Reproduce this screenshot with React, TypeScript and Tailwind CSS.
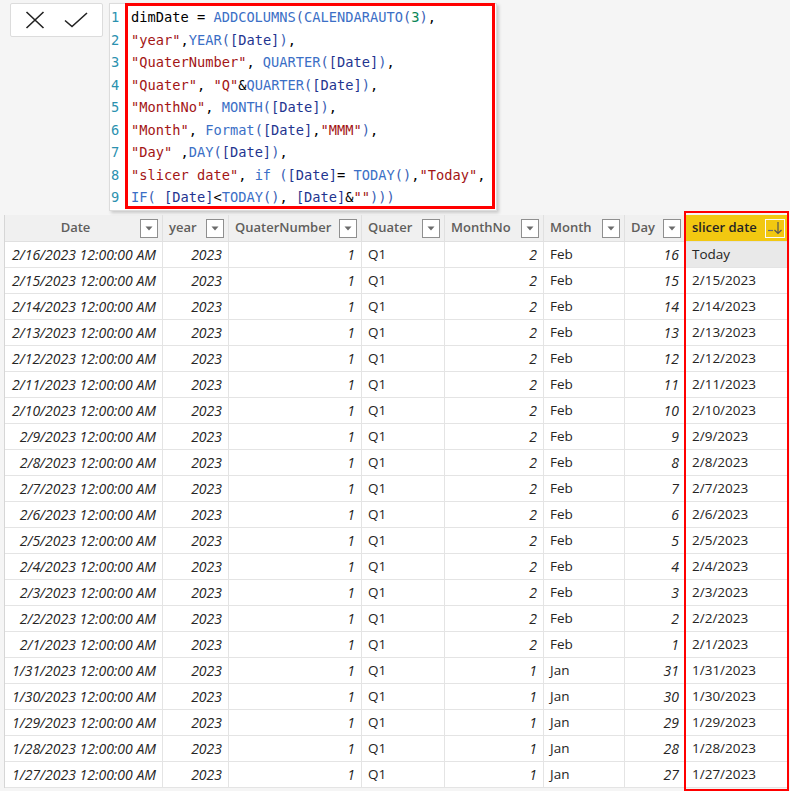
import React from 'react';

const codeLines = [
  'dimDate = ADDCOLUMNS(CALENDARAUTO(3),',
  '"year",YEAR([Date]),',
  '"QuaterNumber", QUARTER([Date]),',
  '"Quater", "Q"&QUARTER([Date]),',
  '"MonthNo", MONTH([Date]),',
  '"Month", Format([Date],"MMM"),',
  '"Day" ,DAY([Date]),',
  '"slicer date", if ([Date]= TODAY(),"Today",',
  'IF( [Date]<TODAY(), [Date]&"")))',
];

const tokenRe = /("[^"]*")|(\[[^\]]*\])|([A-Za-z]+(?=\s*\())|(\d+)|([()])|([^"\[A-Za-z\d()]+|[A-Za-z]+)/g;

const CodeLine = ({ text }: { text: string }) => {
  const parts: React.ReactNode[] = [];
  let m: RegExpExecArray | null;
  let i = 0;
  tokenRe.lastIndex = 0;
  while ((m = tokenRe.exec(text)) !== null) {
    let cls = 'text-black';
    if (m[1]) cls = 'text-[#a31515]';
    else if (m[2]) cls = 'text-[#1f3590]';
    else if (m[3]) cls = 'text-[#3b6fc6]';
    else if (m[4]) cls = 'text-[#098658]';
    else if (m[5]) cls = 'text-[#3b5fb5]';
    parts.push(
      <span key={i++} className={cls}>
        {m[0]}
      </span>
    );
  }
  return <div className="whitespace-pre">{parts}</div>;
};

type Row = { date: string; day: number; month: string; monthNo: number; slicer: string };

const makeRows = (): Row[] => {
  const rows: Row[] = [];
  for (let d = 16; d >= 1; d--) {
    rows.push({
      date: `2/${d}/2023 12:00:00 AM`,
      day: d,
      month: 'Feb',
      monthNo: 2,
      slicer: d === 16 ? 'Today' : `2/${d}/2023`,
    });
  }
  for (let d = 31; d >= 27; d--) {
    rows.push({ date: `1/${d}/2023 12:00:00 AM`, day: d, month: 'Jan', monthNo: 1, slicer: `1/${d}/2023` });
  }
  return rows;
};

const FilterIcon = () => (
  <div className="flex h-[19px] w-[18px] shrink-0 items-center justify-center border border-[#8f8f8f] bg-white">
    <svg width="8" height="5" viewBox="0 0 8 5">
      <path d="M0.5 0.5 L7.5 0.5 L4 4.5 Z" fill="#6b6b6b" />
    </svg>
  </div>
);

const SortIcon = () => (
  <div className="flex h-[19px] w-[20px] shrink-0 items-center justify-center border border-[#fbfbfb]">
    <svg width="16" height="14" viewBox="0 0 16 14">
      <path d="M1 9.5 H6" stroke="#6b6b6b" strokeWidth="1.2" />
      <path d="M11 1 V12.5 M7.5 9 L11 12.5 L14.5 9" stroke="#555" strokeWidth="1.2" fill="none" />
    </svg>
  </div>
);

const cols = [
  { name: 'Date', w: 'w-[158px]', center: true },
  { name: 'year', w: 'w-[66px]' },
  { name: 'QuaterNumber', w: 'w-[133px]' },
  { name: 'Quater', w: 'w-[83px]' },
  { name: 'MonthNo', w: 'w-[99px]' },
  { name: 'Month', w: 'w-[81px]' },
  { name: 'Day', w: 'w-[61px]' },
];

const cell = 'flex h-[26px] shrink-0 items-center border-r border-b border-[#e4e4e4] px-[6px] text-[13.5px]';
const num = `${cell} justify-end italic !text-[14px]`;

export default function App() {
  const rows = makeRows();
  return (
    <div
      className="relative h-[791px] w-[790px] overflow-hidden bg-[#f5f5f5] text-[13px] text-[#252423]"
      style={{ fontFamily: '"Open Sans", "Noto Sans", sans-serif' }}
    >
      {/* formula bar */}
      <div className="flex h-[215px] items-start">
        <div className="ml-[10px] mt-[3px] flex h-[34px] w-[93px] items-center justify-center gap-[19px] rounded-[2px] border border-[#dcdcdc] bg-white">
          <svg width="20" height="18" viewBox="0 0 20 18">
            <path d="M1.5 1 L18.5 17 M18.5 1 L1.5 17" stroke="#222" strokeWidth="1.6" />
          </svg>
          <svg width="24" height="16" viewBox="0 0 24 16">
            <path d="M1 8.5 L8 14.5 L23 1" stroke="#222" strokeWidth="1.6" fill="none" />
          </svg>
        </div>
        <div
          className="ml-[6px] mt-[3px] flex h-[208px] w-[388px] border border-[#dcdcdc] bg-white shadow-[2px_2px_3px_rgba(0,0,0,0.18)]"
          style={{ fontFamily: '"DejaVu Sans Mono", "Liberation Mono", monospace' }}
        >
          <div className="w-[15px] pl-[1px] pt-[2px] text-[13.7px] leading-[22.5px] text-[#2b91af]">
            {codeLines.map((_, i) => (
              <div key={i}>{i + 1}</div>
            ))}
          </div>
          <div className="-mt-[1px] h-[206px] w-[370px] border-[3px] border-[#ff0000] pl-[3px] pt-0 text-[13.7px] leading-[22.5px]">
            {codeLines.map((l, i) => (
              <CodeLine key={i} text={l} />
            ))}
          </div>
        </div>
      </div>

      {/* table */}
      <div className="ml-[4px] w-[784px] border-l border-[#d6d6d6] bg-white">
        <div className="flex h-[27px] bg-[#f0f0f0] font-semibold text-[#605e5c]">
          {cols.map((c) => (
            <div key={c.name} className={`flex ${c.w} shrink-0 items-center border-r border-b border-[#e0e0e0] pl-[6px] pr-[4px]`}>
              <span className={`flex-1 ${c.center ? 'text-center' : ''}`}>{c.name}</span>
              <FilterIcon />
            </div>
          ))}
          <div className="flex w-[102px] shrink-0 items-center border-b border-[#e0e0e0] bg-[#f2c811] pl-[6px] pr-[3px] text-[#252423]">
            <span className="flex-1">slicer date</span>
            <SortIcon />
          </div>
        </div>
        {rows.map((r, i) => (
          <div key={i} className="flex">
            <div className={`${num} w-[158px]`}>{r.date}</div>
            <div className={`${num} w-[66px]`}>2023</div>
            <div className={`${num} w-[133px]`}>1</div>
            <div className={`${cell} w-[83px]`}>Q1</div>
            <div className={`${num} w-[99px]`}>{r.monthNo}</div>
            <div className={`${cell} w-[81px]`}>{r.month}</div>
            <div className={`${num} w-[61px]`}>{r.day}</div>
            <div className={`${cell} w-[102px] ${i === 0 ? 'bg-[#e9e9e9]' : ''}`}>{r.slicer}</div>
          </div>
        ))}
      </div>

      {/* highlight around slicer date column */}
      <div className="pointer-events-none absolute left-[684px] top-[211px] h-[580px] w-[105px] border-2 border-[#ff0000]" />
    </div>
  );
}
